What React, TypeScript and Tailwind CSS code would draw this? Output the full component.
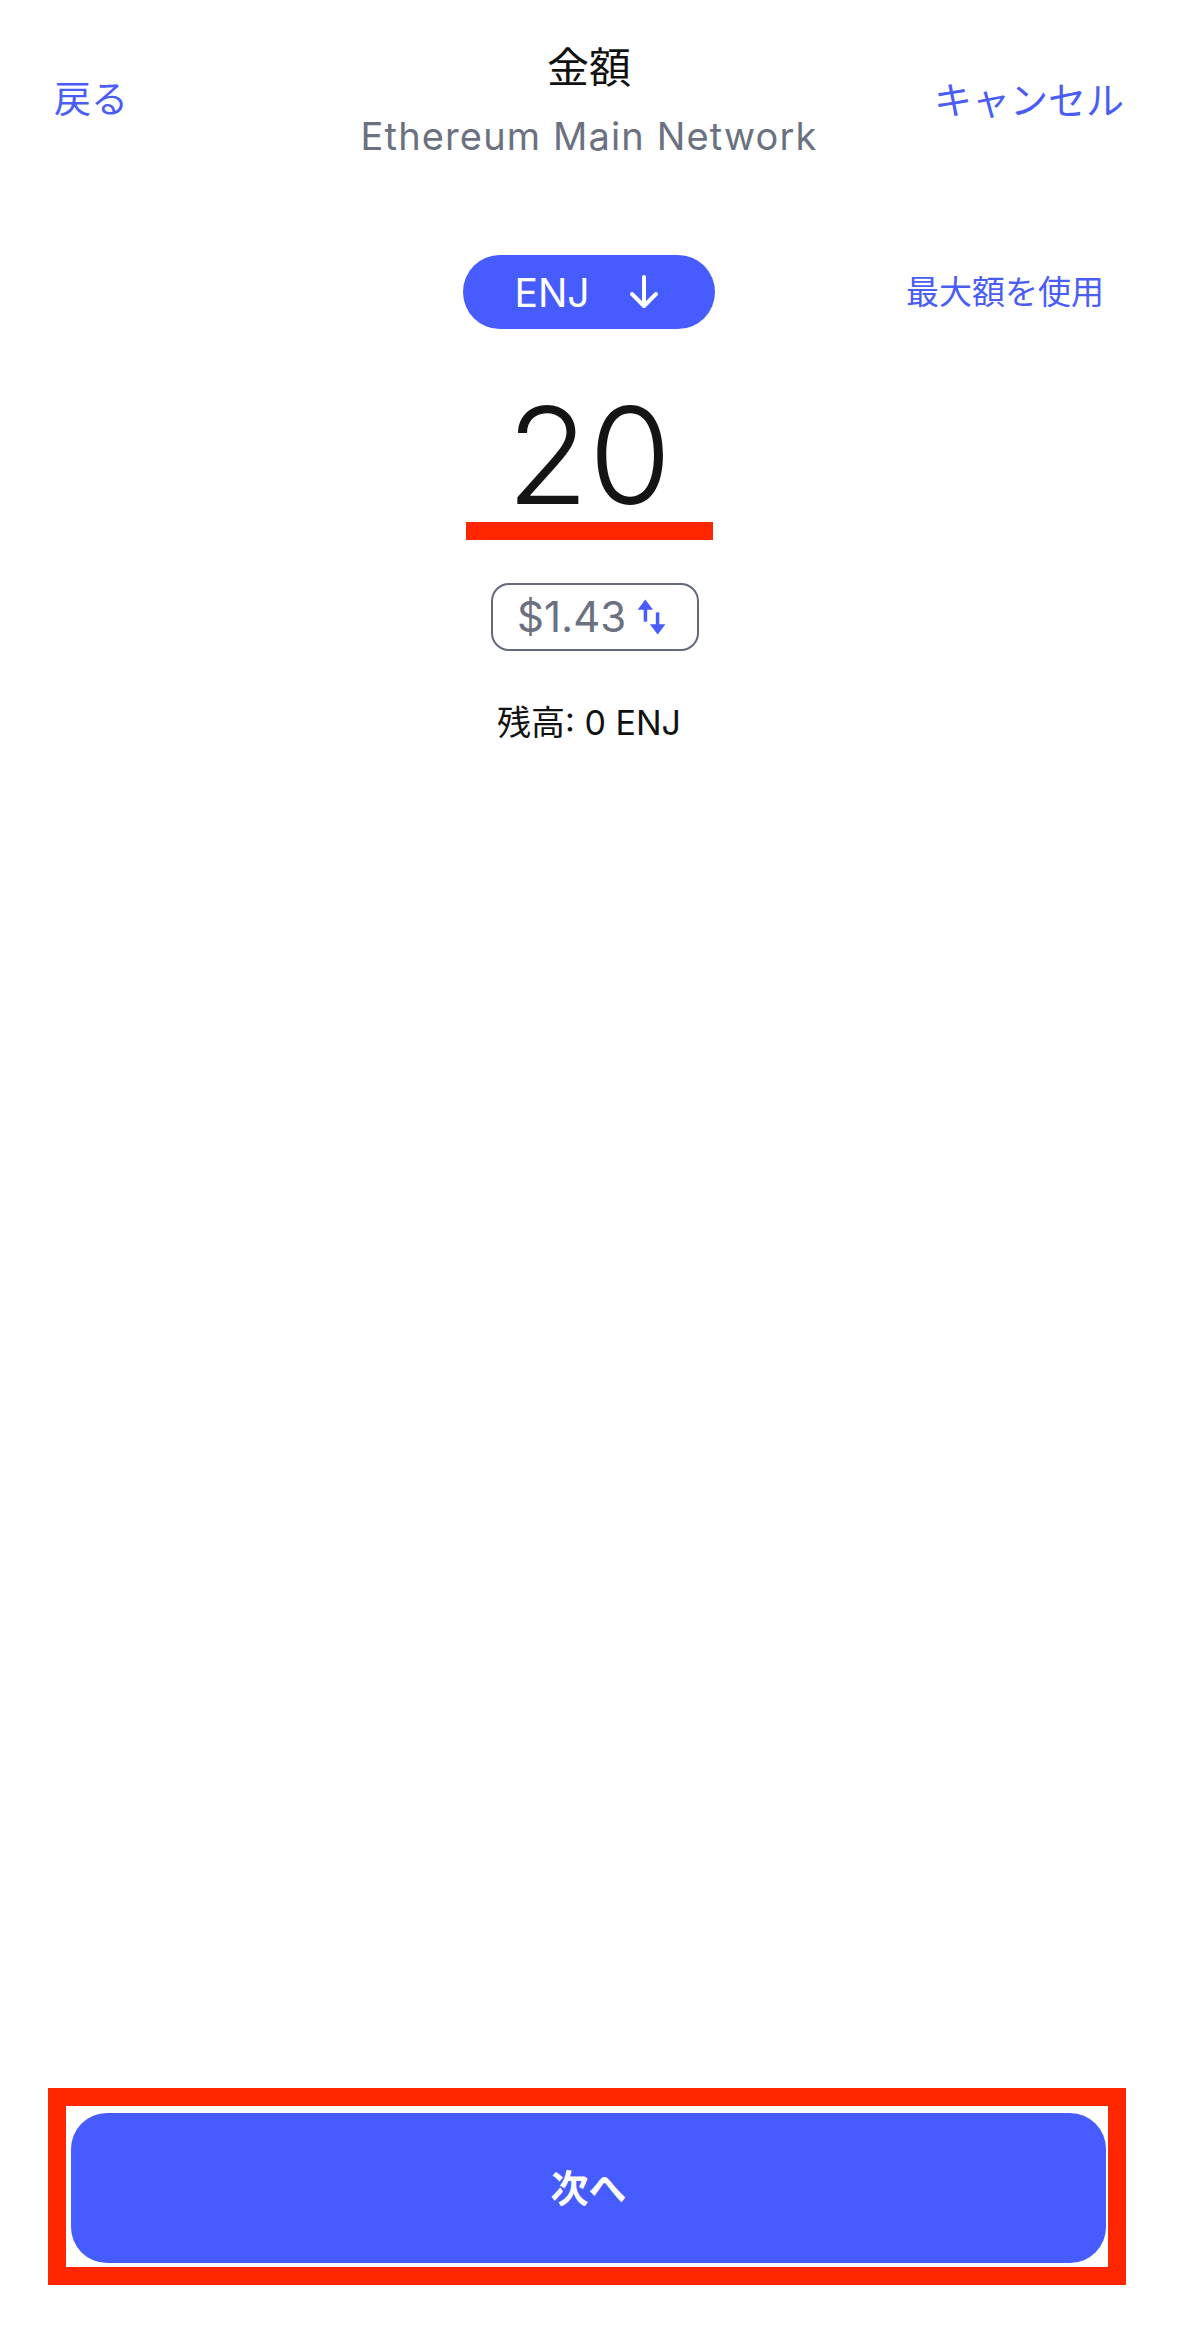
import React from "react";

const font = "font-['Inter','Noto_Sans_CJK_JP',sans-serif]";

function ArrowDown() {
  return (
    <svg width="32" height="34" viewBox="0 0 32 34" fill="none" className="shrink-0">
      <path
        d="M16 2V31M4 19L16 31L28 19"
        stroke="white"
        strokeWidth="4"
        strokeLinecap="round"
        strokeLinejoin="round"
      />
    </svg>
  );
}

function SwapIcon() {
  return (
    <svg width="29" height="36" viewBox="0 0 28 35" className="shrink-0">
      {/* up arrow on the left */}
      <path d="M0.5 10.5L8 0.5L15.5 10.5Z" fill="#475cff" />
      <rect x="6.4" y="8" width="3.4" height="14" fill="#475cff" />
      {/* down arrow on the right */}
      <rect x="18.2" y="13" width="3.4" height="14" fill="#475cff" />
      <path d="M12.5 24.5L27.5 24.5L20 34.5Z" fill="#475cff" />
    </svg>
  );
}

export default function App() {
  return (
    <div className={`${font} flex min-h-screen w-full flex-col bg-white`}>
      {/* nav bar */}
      <header className="grid grid-cols-[1fr_auto_1fr] items-center px-[54px] pt-[42px]">
        <span className="text-[37px] leading-[44px] text-[#4a5df6]">戻る</span>
        <div className="flex flex-col items-center">
          <h1 className="text-[42px] font-normal leading-[52px] text-[#111111]">金額</h1>
          <p className="mt-[20px] text-[38px] leading-[44px] tracking-[0.03em] text-[#6b7180]">
            Ethereum Main Network
          </p>
        </div>
        <span className="justify-self-end text-[38px] leading-[44px] text-[#4a5df6]">
          キャンセル
        </span>
      </header>

      {/* token selector */}
      <div className="mt-[97px] grid grid-cols-[1fr_auto_1fr] items-center">
        <span />
        <button className="flex h-[74px] w-[252px] items-center justify-center gap-[38px] rounded-full bg-[#475cff] pr-[4px]">
          <span className="text-[39px] leading-none text-white">ENJ</span>
          <ArrowDown />
        </button>
        <span className="justify-self-end pr-[74px] text-[33px] leading-[40px] text-[#4a5df6]">
          最大額を使用
        </span>
      </div>

      {/* amount */}
      <div className="mt-[60px] flex flex-col items-center">
        <div className="text-[134px] font-light leading-[132px] text-[#141414]">20</div>
        <div className="mt-[1px] h-[18px] w-[247px] bg-[#ff2600]" />

        <div className="mt-[43px] ml-[12px] flex h-[68px] w-[208px] items-center gap-[11px] rounded-[18px] border-2 border-[#646a7c] pl-[24px]">
          <span className="text-[42px] leading-none text-[#6b7180]">$1.43</span>
          <SwapIcon />
        </div>

        <p className="mt-[52px] text-[34px] leading-[40px] text-[#111111]">残高: 0 ENJ</p>
      </div>

      {/* next button */}
      <div className="mt-auto mb-[47px] ml-[48px] mr-[52px] border-[18px] border-[#ff2600] pt-[7px] pr-[2px] pb-[4px] pl-[5px]">
        <button className="flex h-[150px] w-full items-center justify-center rounded-[36px] bg-[#475cff]">
          <span className="text-[38px] font-semibold leading-none text-white">次へ</span>
        </button>
      </div>
    </div>
  );
}
